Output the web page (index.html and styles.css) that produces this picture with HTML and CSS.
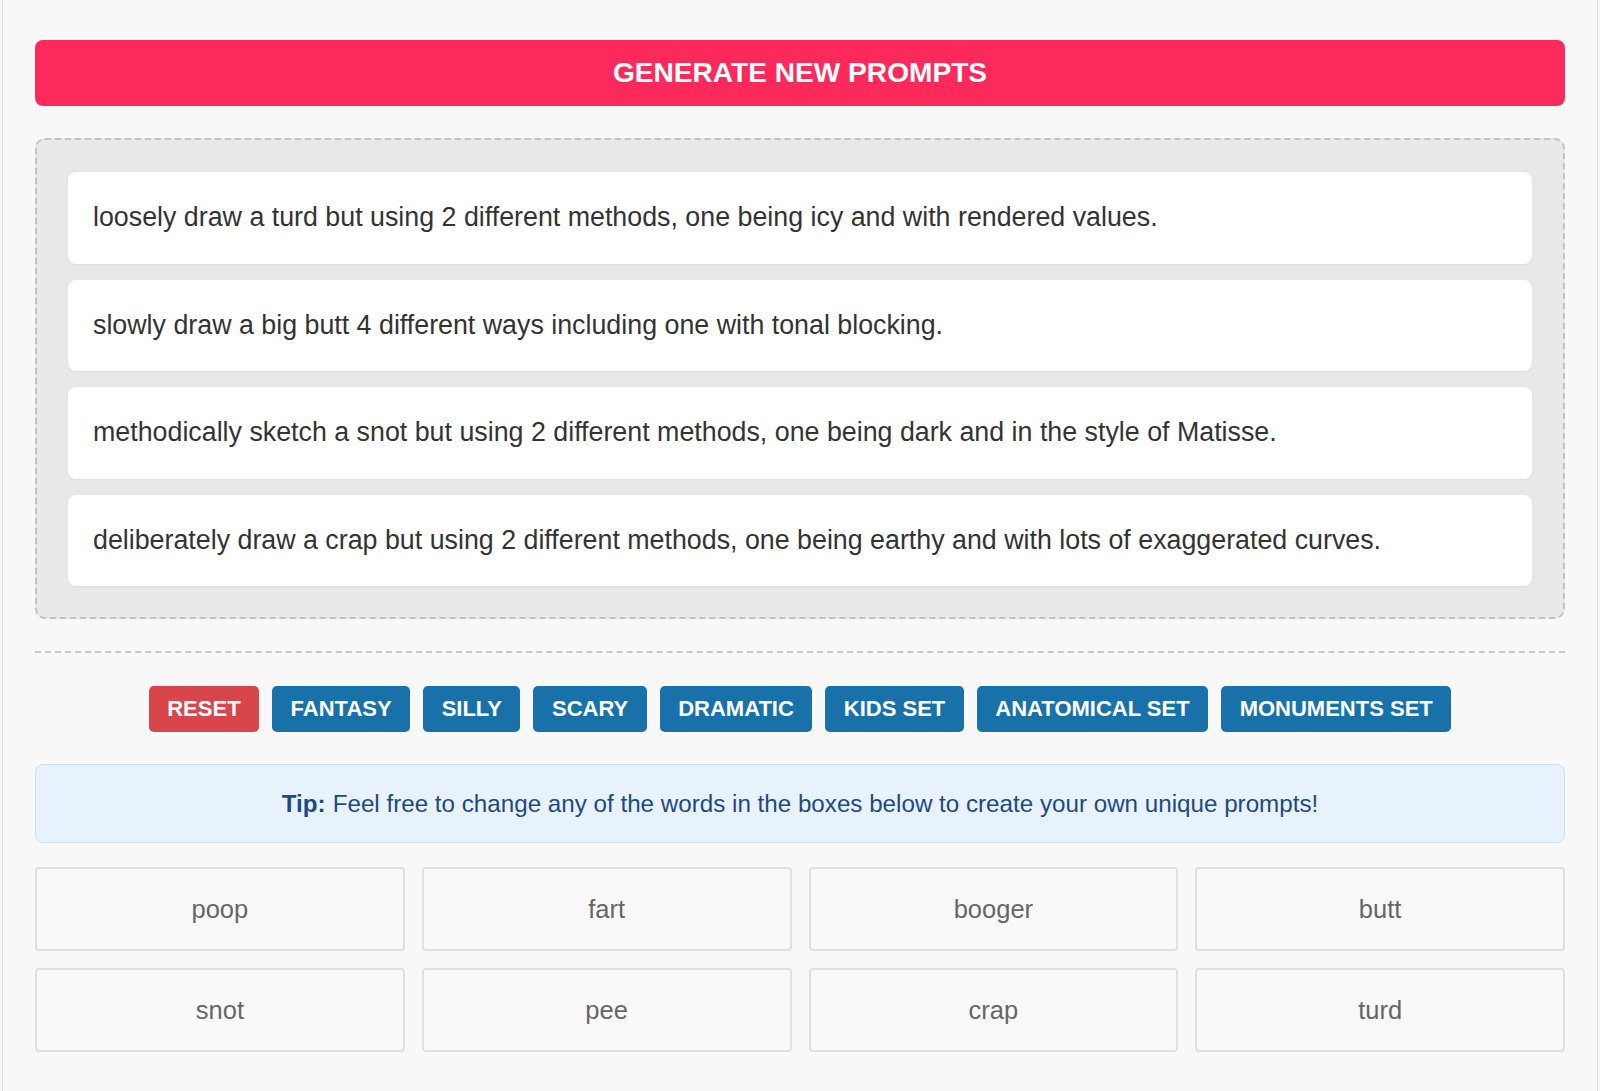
FILE: index.html
```html
<!DOCTYPE html>
<html lang="en">
<head>
<meta charset="utf-8">
<title>Drawing Prompt Generator</title>
<link rel="stylesheet" href="styles.css">
</head>
<body>
<div class="page">
  <button class="generate">GENERATE NEW PROMPTS</button>

  <div class="prompts">
    <div class="prompt">loosely draw a turd but using 2 different methods, one being icy and with rendered values.</div>
    <div class="prompt">slowly draw a big butt 4 different ways including one with tonal blocking.</div>
    <div class="prompt">methodically sketch a snot but using 2 different methods, one being dark and in the style of Matisse.</div>
    <div class="prompt">deliberately draw a crap but using 2 different methods, one being earthy and with lots of exaggerated curves.</div>
  </div>

  <hr class="divider">

  <div class="sets">
    <button class="set reset">RESET</button>
    <button class="set">FANTASY</button>
    <button class="set">SILLY</button>
    <button class="set">SCARY</button>
    <button class="set">DRAMATIC</button>
    <button class="set">KIDS SET</button>
    <button class="set">ANATOMICAL SET</button>
    <button class="set">MONUMENTS SET</button>
  </div>

  <div class="tip"><strong>Tip:</strong> Feel free to change any of the words in the boxes below to create your own unique prompts!</div>

  <div class="words">
    <input class="word" value="poop">
    <input class="word" value="fart">
    <input class="word" value="booger">
    <input class="word" value="butt">
    <input class="word" value="snot">
    <input class="word" value="pee">
    <input class="word" value="crap">
    <input class="word" value="turd">
  </div>
</div>
</body>
</html>
```

FILE: styles.css
```css
* { box-sizing: border-box; }

html, body {
  margin: 0;
  padding: 0;
  background: #f8f8f8;
  font-family: "Liberation Sans", Arial, sans-serif;
}

.page {
  margin: 0 2px;
  min-height: 1091px;
  border-left: 1px solid #dcdcdc;
  border-right: 1px solid #dcdcdc;
  padding: 40px 32px 40px;
}

.generate {
  display: block;
  width: 100%;
  height: 66px;
  border: none;
  border-radius: 8px;
  background: #fb2a5b;
  color: #fff;
  font-family: inherit;
  font-size: 28.1px;
  font-weight: bold;
}

.prompts {
  margin-top: 32px;
  background: #e8e8e8;
  border: 2px dashed #c2c2c2;
  border-radius: 10px;
  padding: 32px 31px 31px;
  display: flex;
  flex-direction: column;
  gap: 16px;
}

.prompt {
  height: 91.5px;
  background: #fff;
  border-radius: 8px;
  box-shadow: 0 1px 3px rgba(0,0,0,0.05);
  display: flex;
  align-items: center;
  padding-left: 25px;
  font-size: 26.8px;
  color: #333;
}

.divider {
  margin: 32px 0 0;
  border: none;
  border-top: 2px dashed #c8c8c8;
  height: 0;
}

.sets {
  margin-top: 33px;
  display: flex;
  justify-content: center;
  gap: 13px;
}

.set {
  height: 46px;
  border: none;
  border-radius: 5px;
  background: #1872a9;
  color: #fff;
  font-family: inherit;
  font-size: 22px;
  font-weight: bold;
  padding: 0 18.5px;
}

.set.reset { background: #d8454a; }

.tip {
  margin-top: 32px;
  height: 79px;
  background: #e8f2fd;
  border: 1px solid #cde0f3;
  border-radius: 8px;
  display: flex;
  align-items: center;
  justify-content: center;
  font-size: 24.2px;
  color: #1d4a82;
}

.tip strong { margin-right: 7px; }

.words {
  margin-top: 24px;
  display: grid;
  grid-template-columns: repeat(4, 1fr);
  gap: 17px;
}

.word {
  height: 84px;
  width: 100%;
  background: #f9f9f9;
  border: 2px solid #e0e0e0;
  border-radius: 4px;
  text-align: center;
  font-family: inherit;
  font-size: 25.5px;
  color: #666;
  outline: none;
}
```
